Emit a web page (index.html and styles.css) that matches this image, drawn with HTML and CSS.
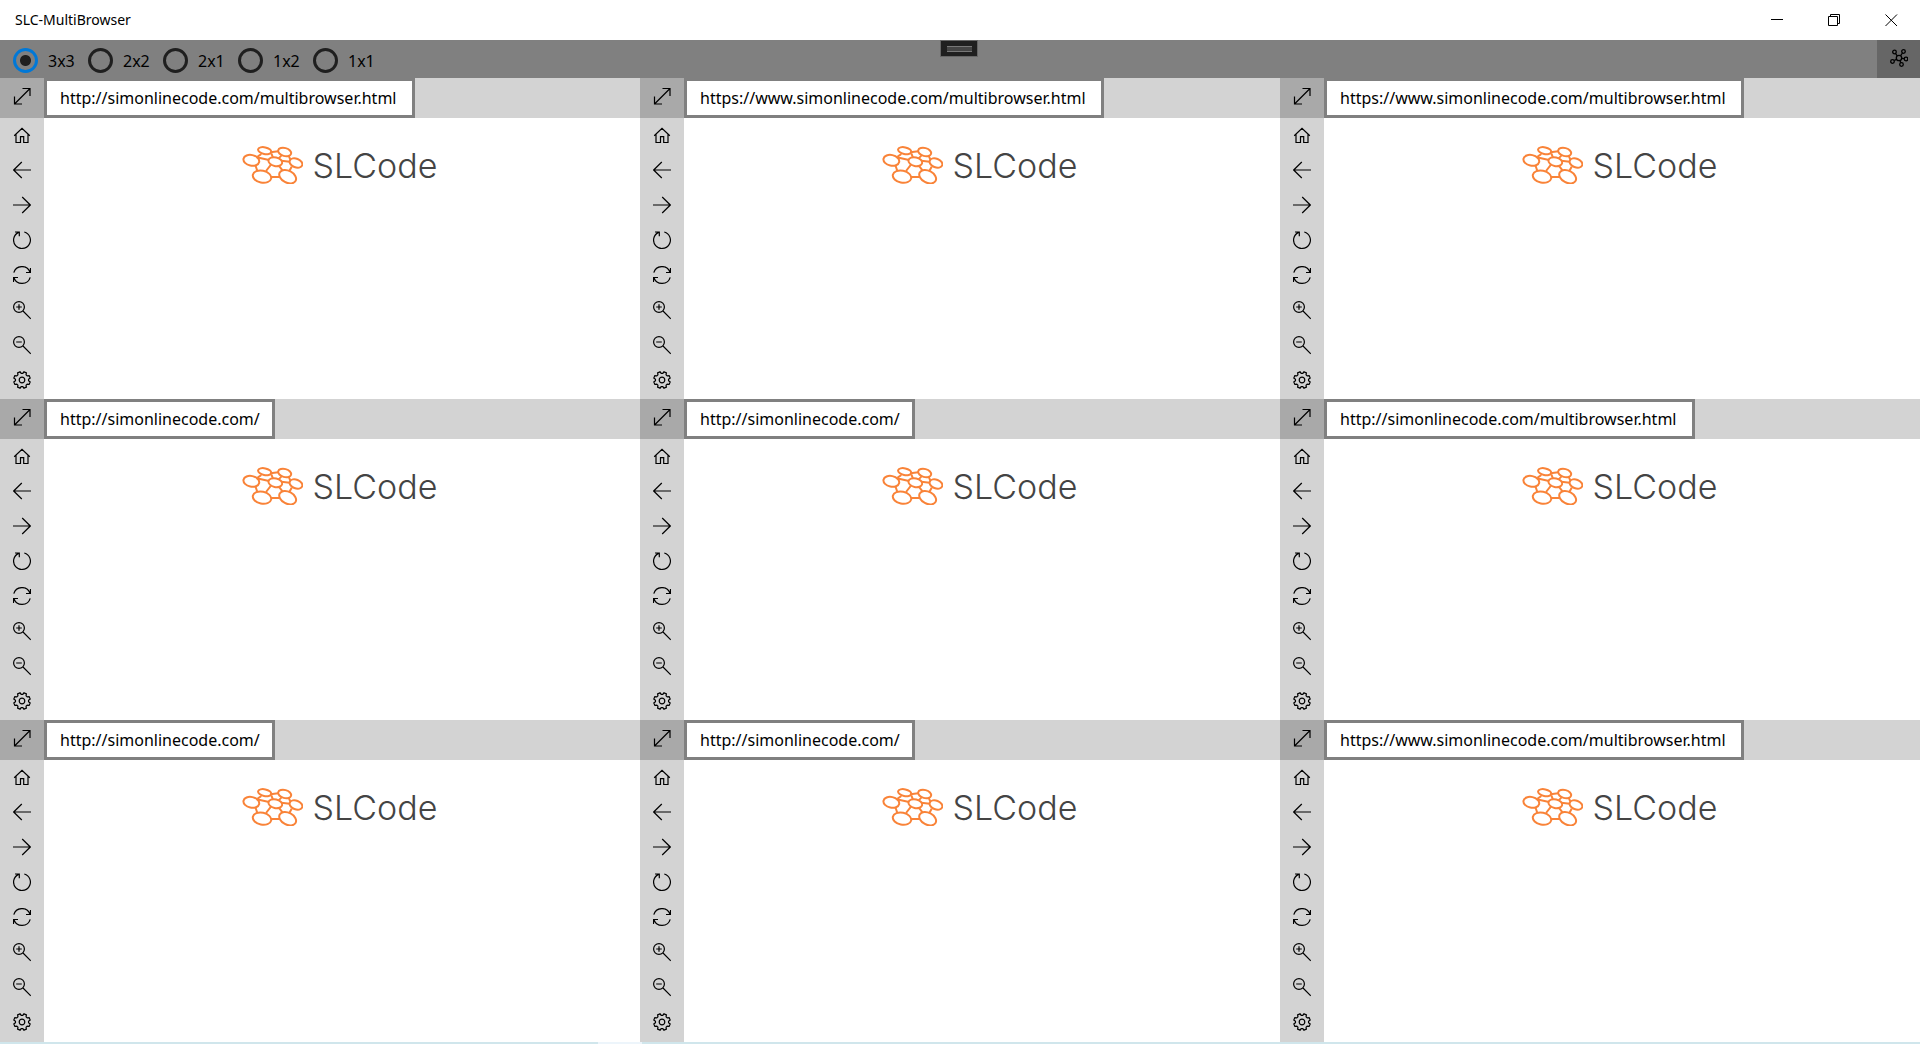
FILE: index.html
```html
<!DOCTYPE html>
<html lang="en">
<head>
<meta charset="utf-8">
<title>SLC-MultiBrowser</title>
<link rel="stylesheet" href="styles.css">
</head>
<body>
<svg class="sprite" aria-hidden="true">
  <symbol id="expand" viewBox="0 0 18 18"><path d="M1.500 16 17 .5M9.500.5H17V8M1.500 8.500V16H9"/></symbol>
  <symbol id="home" viewBox="0 0 18 19"><path d="M1.200 9.800 9 2.300l7.800 7.500M3 8.500v8h4.500v-5.800h3.200v5.800H15v-8"/></symbol>
  <symbol id="back" viewBox="0 0 18 19"><path d="M18 9H.7M8.800 1 .7 9l8.100 8"/></symbol>
  <symbol id="forward" viewBox="0 0 18 19"><path d="M0 9h17.300M9.200 1l8.100 8-8.100 8"/></symbol>
  <symbol id="refresh" viewBox="0 0 18 19"><path d="M11.300 1A8.400 8.400 0 1 1 5.600 1.400M2 1h4.300v4.300"/></symbol>
  <symbol id="sync" viewBox="0 0 18 19"><path d="M.8 6.700A8.500 8.500 0 0 1 17 6.300M17.500 2v4.500H13M17.200 11.300A8.500 8.500 0 0 1 1 11.700M.5 16v-4.500H5"/></symbol>
  <symbol id="zoom-in" viewBox="0 0 18 19"><circle cx="6" cy="6" r="5.400"/><path d="m10 10 7.800 7.800M3.200 6h5.600M6 3.200v5.600"/></symbol>
  <symbol id="zoom-out" viewBox="0 0 18 19"><circle cx="6" cy="6" r="5.400"/><path d="m10 10 7.800 7.800M3.200 6h5.600"/></symbol>
  <symbol id="settings" viewBox="-9 -9 18 19"><circle r="2.800"/><path d="M.8-6.550 1.960-8.170 4.390-7.160 4.060-5.200 5.200-4.060 7.160-4.390 8.170-1.960 6.550-.8V.8L8.170 1.960 7.160 4.390 5.200 4.060 4.060 5.200 4.390 7.160 1.960 8.170.8 6.550H-.8L-1.960 8.170-4.390 7.160-4.060 5.200-5.200 4.060-7.160 4.390-8.170 1.960-6.550.8V-.8L-8.170-1.960-7.160-4.390-5.200-4.060-4.060-5.200-4.390-7.160-1.960-8.170-.8-6.550Z"/></symbol>
  <symbol id="hive" viewBox="18 18 183 114">
    <ellipse cx="46" cy="61" rx="24" ry="16" transform="rotate(12 46 61)"/>
    <ellipse cx="86" cy="32" rx="20" ry="10" transform="rotate(12 86 32)"/>
    <ellipse cx="146" cy="36" rx="20" ry="12" transform="rotate(15 146 36)"/>
    <ellipse cx="118" cy="65" rx="21" ry="13" transform="rotate(12 118 65)"/>
    <ellipse cx="180" cy="69" rx="20" ry="13" transform="rotate(22 180 69)"/>
    <ellipse cx="78" cy="110" rx="28" ry="18" transform="rotate(12 78 110)"/>
    <ellipse cx="155" cy="110" rx="27" ry="18" transform="rotate(28 155 110)"/>
    <path d="m65 50 11-8M103 37l24-3M106 40l5 13M136 47l-8 8M62 52l37 8M136 62l25 3M158 47l5 12M105 74 90 93M58 75l6 18M128 76l12 16M167 80l-7 13M105 111h24"/>
  </symbol>
</svg>

<header class="titlebar">
  <h1 class="title">SLC-MultiBrowser</h1>
  <div class="window-controls">
    <button type="button" aria-label="Minimize"><svg width="13" height="13"><path d="M0 5.500h12"/></svg></button>
    <button type="button" aria-label="Restore"><svg width="13" height="13"><path d="M.5 2.500h9v9h-9zM2.500 2.500v-2h9v9h-2"/></svg></button>
    <button type="button" aria-label="Close"><svg width="13" height="13"><path d="m.5.5 11.500 11.500M12 .5.5 12"/></svg></button>
  </div>
</header>

<nav class="toolbar" aria-label="Layout">
  <label class="layout"><input type="radio" name="layout" checked>3x3</label>
  <label class="layout"><input type="radio" name="layout">2x2</label>
  <label class="layout"><input type="radio" name="layout">2x1</label>
  <label class="layout"><input type="radio" name="layout">1x2</label>
  <label class="layout"><input type="radio" name="layout">1x1</label>
  <button class="grip" type="button" aria-label="Show handle"></button>
  <button class="network" type="button" aria-label="Connections">
    <svg width="18" height="18"><circle cx="9" cy="9" r="2.700"/><circle cx="4.500" cy="3" r="1.800"/><circle cx="13.500" cy="2.500" r="1.800"/><circle cx="16" cy="10" r="1.800"/><circle cx="11.500" cy="15.500" r="1.800"/><circle cx="2.500" cy="12.500" r="1.800"/><path d="m5.600 4.600 1.700 2.200M12.500 4l-1.900 2.700M11.800 9.300l2.300.4M10 11.500l.8 2.300M6.500 10.300l-2.300 1.200"/></svg>
  </button>
</nav>

<main class="panes" id="panes"></main>
<div class="edge"></div>
<script src="script.js"></script>
</body>
</html>
```
FILE: styles.css
```css
* { box-sizing: border-box; }

body {
  margin: 0;
  min-height: 100vh;
  display: flex;
  flex-direction: column;
  background: #fff;
  color: #000;
  font-family: "Noto Sans", "Open Sans", sans-serif;
}

button {
  display: flex;
  align-items: center;
  justify-content: center;
  margin: 0;
  padding: 0;
  border: 0;
  background: none;
  color: inherit;
}

svg { fill: none; stroke: currentColor; }
.sprite { display: none; }

.titlebar {
  display: flex;
  justify-content: space-between;
  height: 40px;
  padding-left: 15px;
}
.title {
  margin: 0;
  font-size: 14px;
  font-weight: 400;
  line-height: 40px;
}
.window-controls { display: flex; }
.window-controls button { width: 57px; }

.toolbar {
  position: relative;
  display: flex;
  height: 38px;
  padding-left: 13px;
  background: #808080;
}
.layout {
  display: flex;
  align-items: center;
  gap: 10px;
  width: 75px;
  padding-top: 4px;
  font-size: 16px;
  line-height: 24px;
}
.layout input {
  appearance: none;
  flex: none;
  width: 25px;
  height: 25px;
  margin: 0 0 2px;
  border: 3px solid #1f1f1f;
  border-radius: 50%;
}
.layout input:checked {
  border-color: #0078d7;
  background: radial-gradient(circle, #1f1f1f 5px, transparent 6px);
}
.grip {
  position: absolute;
  top: 0;
  left: 50%;
  width: 38px;
  height: 17px;
  margin-left: -20px;
  border: 1px solid #666;
  background: #1f1f1f;
}
.grip::before {
  content: "";
  width: 25px;
  height: 4px;
  border-top: 1px solid #777;
  border-bottom: 1px solid #777;
  background: #444;
}
.network {
  width: 43px;
  margin-left: auto;
  padding-bottom: 2px;
  background: #666;
}
.network svg { stroke-width: 1.3; }

.panes {
  flex: 1;
  display: grid;
  grid-template-columns: repeat(3, 1fr);
  grid-template-rows: auto auto 1fr;
}
.pane {
  display: grid;
  grid-template-columns: 44px 1fr;
  grid-template-rows: 40px 1fr;
}
.expand {
  padding-bottom: 2px;
  background: #a9a9a9;
}
.expand svg,
.tools svg { stroke-width: 1.2; }
.address { background: #d3d3d3; }
.url {
  display: block;
  width: 231px;
  height: 40px;
  padding: 0 0 0 13px;
  border: 3px solid #808080;
  background: #fff;
  color: #000;
  font: 16px "Noto Sans", "Open Sans", sans-serif;
}
.url.page { width: 371px; }
.url.secure { width: 420px; }

.tools {
  padding-bottom: 1px;
  background: #d3d3d3;
}
.tools button {
  width: 44px;
  height: 35px;
}
.view {
  display: flex;
  justify-content: center;
  padding: 28px 5px 0 0;
}
.logo {
  display: flex;
  gap: 10px;
  color: #444;
  font-family: Inter, "Liberation Sans", sans-serif;
  font-size: 34px;
  font-weight: 300;
  line-height: 40px;
}
.logo svg {
  color: #f98338;
  stroke-width: 6;
}

.edge {
  height: 2px;
  background: linear-gradient(90deg, #d0e6ec 598px, #edf5fb 598px, #edf5fb 642px, #d0e6ec 642px);
}
```
FILE: script.js
```js
const home = { url: "http://simonlinecode.com/", kind: "" };
const page = { url: "http://simonlinecode.com/multibrowser.html", kind: "page" };
const secure = { url: "https://www.simonlinecode.com/multibrowser.html", kind: "secure" };
const panes = [page, secure, secure, home, home, page, home, home, secure];
const tools = ["home", "back", "forward", "refresh", "sync", "zoom-in", "zoom-out", "settings"];

const toolButtons = tools
  .map((t) => `<button type="button" aria-label="${t}"><svg width="18" height="19"><use href="#${t}"/></svg></button>`)
  .join("");

document.getElementById("panes").innerHTML = panes
  .map(({ url, kind }) => `
    <section class="pane">
      <button class="expand" type="button" aria-label="Expand"><svg width="18" height="18"><use href="#expand"/></svg></button>
      <div class="address"><input class="url ${kind}" type="text" aria-label="Address" value="${url}"></div>
      <div class="tools">${toolButtons}</div>
      <div class="view"><div class="logo"><svg width="61" height="38"><use href="#hive"/></svg><span>SLCode</span></div></div>
    </section>`)
  .join("");
```
